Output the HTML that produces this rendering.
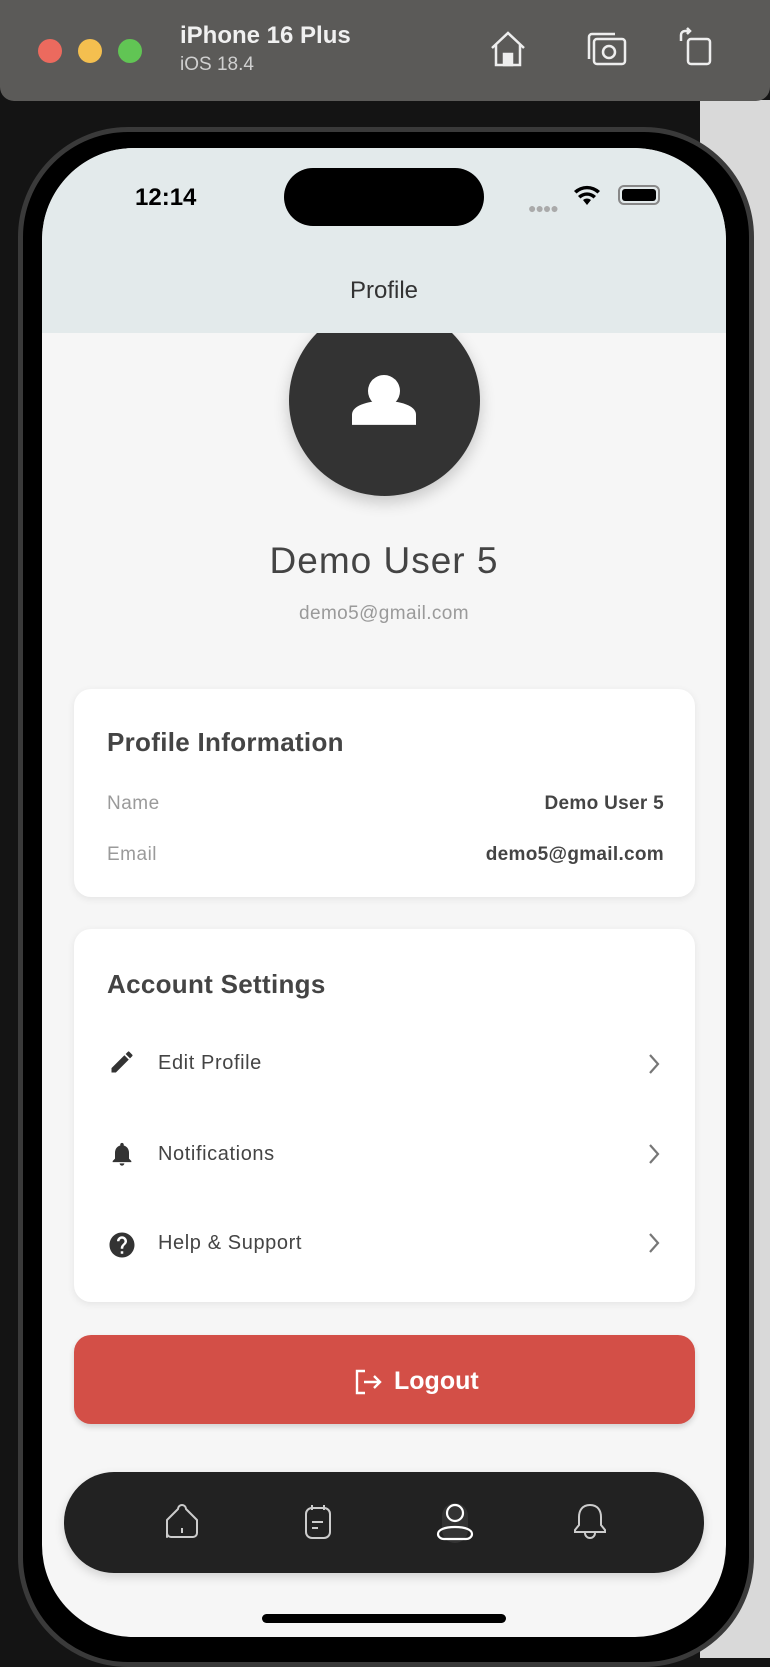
<!DOCTYPE html>
<html><head><meta charset="utf-8"><style>
*{margin:0;padding:0;box-sizing:border-box}
body{width:770px;height:1658px;overflow:hidden;background:#141414;font-family:"Liberation Sans",sans-serif;position:relative}
.abs{position:absolute}
.right{left:700px;top:100px;width:70px;height:1558px;background:#d9d9d9}
.titlebar{left:0;top:0;width:770px;height:101px;background:#5b5a58;border-radius:0 0 14px 14px}
.dot{width:24px;height:24px;border-radius:50%;top:39px}
.frame{left:18px;top:127px;width:736px;height:1540px;background:#000;border-radius:110px;border:5px solid #3a3a3a}
.screen{left:42px;top:148px;width:684px;height:1489px;background:#f6f6f6;border-radius:92px;overflow:hidden}
.header{left:0;top:0;width:684px;height:185px;background:#e3eaeb;z-index:2}
.card{background:#fff;border-radius:17px;box-shadow:0 2px 8px rgba(0,0,0,.08);left:32px;width:621px}
.lbl{color:#9a9a9a;font-size:19px;letter-spacing:.5px}
.val{color:#444;font-size:19px;font-weight:bold;letter-spacing:.3px;right:31px}
.row{color:#444;font-size:20px;letter-spacing:.6px;left:84px}
</style></head><body>
<div class="abs right"></div>
<div class="abs titlebar">
 <div class="abs dot" style="left:38px;background:#ec6a5e"></div>
 <div class="abs dot" style="left:78px;background:#f4bf4f"></div>
 <div class="abs dot" style="left:118px;background:#61c554"></div>
 <div class="abs" style="left:180px;top:22px;color:#f0f0f0;font-size:24px;font-weight:bold">iPhone 16 Plus</div>
 <div class="abs" style="left:180px;top:54px;color:#d0d0d0;font-size:19px">iOS 18.4</div>
 <svg class="abs" style="left:488px;top:30px" width="40" height="38" viewBox="0 0 40 38" fill="none" stroke="#eee" stroke-width="2.5"><path d="M4 18 L20 3 L36 18 M8 15 V35 H32 V15"/><rect x="16" y="24" width="8" height="11" fill="#eee"/></svg>
 <svg class="abs" style="left:585px;top:31px" width="44" height="36" viewBox="0 0 44 36" fill="none" stroke="#eee" stroke-width="2.5"><path d="M4 28 V6 a3 3 0 0 1 3-3 H30"/><rect x="9" y="8" width="31" height="25" rx="3"/><circle cx="24" cy="21" r="6"/></svg>
 <svg class="abs" style="left:678px;top:27px" width="36" height="40" viewBox="0 0 36 40" fill="none" stroke="#eee" stroke-width="2.5"><rect x="10" y="12" width="22" height="25" rx="3"/><path d="M3 14 V8 a4 4 0 0 1 4-4 H12 M9 1 L12 4 L9 7"/></svg>
</div>
<div class="abs frame"></div>
<div class="abs screen">
 <div class="abs header">
  <div class="abs" style="left:93px;top:36px;font-size:24px;font-weight:bold;color:#000">12:14</div>
  <div class="abs" style="left:242px;top:20px;width:200px;height:58px;background:#000;border-radius:29px"></div>
  <div class="abs" style="left:486px;top:52px;color:#aaa;font-size:14px;letter-spacing:-1px">●●●●</div>
  <svg class="abs" style="left:531px;top:36px" width="28" height="22" viewBox="0 0 28 22"><path d="M14 21 L10 16 a6 6 0 0 1 8 0Z M5 12 a13 13 0 0 1 18 0 l-2.5 2.5 a9 9 0 0 0-13 0Z M1 7 a19 19 0 0 1 26 0 l-2.5 2.5 a15 15 0 0 0-21 0Z" fill="#000"/></svg>
  <div class="abs" style="left:576px;top:37px;width:42px;height:20px;border:2px solid #888;border-radius:6px;padding:2px"><div style="width:100%;height:100%;background:#000;border-radius:3px"></div></div>
  <div class="abs" style="left:0;top:129px;width:684px;text-align:center;font-size:24px;color:#333">Profile</div>
 </div>
 <div class="abs" style="left:247px;top:157px;width:191px;height:191px;border-radius:50%;background:#333;box-shadow:0 6px 16px rgba(0,0,0,.2)">
  <svg class="abs" style="left:60px;top:60px" width="72" height="72" viewBox="0 0 72 72" fill="#fff"><circle cx="35" cy="26" r="16"/><path d="M3 72 V60 C3 49 20 44 35 44 C50 44 67 49 67 60 V72Z" transform="translate(0,-2) scale(1,0.86)"/></svg>
 </div>
 <div class="abs" style="left:0;top:392px;width:684px;text-align:center;font-size:37px;color:#444;letter-spacing:1px">Demo User 5</div>
 <div class="abs" style="left:0;top:455px;width:684px;text-align:center;font-size:19px;color:#9a9a9a;letter-spacing:.4px">demo5@gmail.com</div>
 <div class="abs card" style="top:541px;height:208px">
  <div class="abs" style="left:33px;top:38px;font-size:26px;font-weight:bold;color:#444;letter-spacing:.3px">Profile Information</div>
  <div class="abs lbl" style="left:33px;top:104px">Name</div>
  <div class="abs val" style="top:104px">Demo User 5</div>
  <div class="abs lbl" style="left:33px;top:155px">Email</div>
  <div class="abs val" style="top:155px">demo5@gmail.com</div>
 </div>
 <div class="abs card" style="top:781px;height:373px">
  <div class="abs" style="left:33px;top:40px;font-size:26px;font-weight:bold;color:#444;letter-spacing:.3px">Account Settings</div>
  <svg class="abs" style="left:34px;top:119px" width="28" height="28" viewBox="0 0 24 24" fill="#333"><path d="M3 17.25V21h3.75L17.81 9.94l-3.75-3.75L3 17.25zM20.71 7.04a1 1 0 0 0 0-1.41l-2.34-2.34a1 1 0 0 0-1.41 0l-1.83 1.83 3.75 3.75 1.83-1.83z"/></svg>
  <div class="abs row" style="top:123px">Edit Profile</div>
  <svg class="abs" style="left:34px;top:211px" width="28" height="28" viewBox="0 0 24 24" fill="#333"><path d="M12 22c1.1 0 2-.9 2-2h-4c0 1.1.9 2 2 2zm6-6v-5c0-3.07-1.64-5.64-4.5-6.32V4c0-.83-.67-1.5-1.5-1.5s-1.5.67-1.5 1.5v.68C7.630 5.36 6 7.920 6 11v5l-2 2v1h16v-1l-2-2z"/></svg>
  <div class="abs row" style="top:214px">Notifications</div>
  <svg class="abs" style="left:33px;top:301px" width="30" height="30" viewBox="0 0 24 24" fill="#333"><path d="M12 2C6.48 2 2 6.48 2 12s4.48 10 10 10 10-4.48 10-10S17.52 2 12 2zm1 17h-2v-2h2v2zm2.07-7.75l-.9.92C13.45 12.9 13 13.5 13 15h-2v-.5c0-1.1.45-2.1 1.17-2.830l1.24-1.26c.37-.36.59-.86.59-1.41 0-1.1-.9-2-2-2s-2 .9-2 2H8c0-2.21 1.79-4 4-4s4 1.79 4 4c0 .88-.36 1.68-.93 2.25z"/></svg>
  <div class="abs row" style="top:303px">Help &amp; Support</div>
  <svg class="abs" style="left:572px;top:123px" width="16" height="24" viewBox="0 0 16 24" fill="none" stroke="#777" stroke-width="2.2"><path d="M4 3 L12 12 L4 21"/></svg>
  <svg class="abs" style="left:572px;top:213px" width="16" height="24" viewBox="0 0 16 24" fill="none" stroke="#777" stroke-width="2.2"><path d="M4 3 L12 12 L4 21"/></svg>
  <svg class="abs" style="left:572px;top:302px" width="16" height="24" viewBox="0 0 16 24" fill="none" stroke="#777" stroke-width="2.2"><path d="M4 3 L12 12 L4 21"/></svg>
 </div>
 <div class="abs" style="left:32px;top:1187px;width:621px;height:89px;background:#d34f47;border-radius:17px;box-shadow:0 3px 6px rgba(0,0,0,.15)">
  <svg class="abs" style="left:280px;top:34px" width="30" height="26" viewBox="0 0 30 26" fill="none" stroke="#fff" stroke-width="2.4"><path d="M11 2 H3 V24 H11 M10 13 H26 M20 7 L26 13 L20 19"/></svg>
  <div class="abs" style="left:320px;top:32px;color:#fff;font-size:25px;font-weight:bold;letter-spacing:0">Logout</div>
 </div>
 <div class="abs" style="left:22px;top:1324px;width:640px;height:101px;background:#222;border-radius:50px;box-shadow:0 4px 10px rgba(0,0,0,.15)">
  <svg class="abs" style="left:100px;top:32px" width="36" height="36" viewBox="0 0 36 36" fill="none" stroke="#ccc" stroke-width="2"><path d="M3 33 V16 L14 5 a4 4 0 0 1 8 0 L33 16 V29 a4 4 0 0 1-4 4 H7 a4 4 0 0 1-4-4Z M18 24 V29" stroke-linejoin="round"/></svg>
  <svg class="abs" style="left:237px;top:31px" width="34" height="38" viewBox="0 0 34 38" fill="none" stroke="#ccc" stroke-width="2"><rect x="5" y="5" width="24" height="30" rx="6"/><path d="M11 2 V7 M23 2 V7 M11 19 H22 M11 25 H17"/></svg>
  <div class="abs" style="left:378px;top:31px;width:26px;height:40px;border-radius:13px;background:#333"></div>
  <svg class="abs" style="left:370px;top:31px" width="42" height="38" viewBox="0 0 42 38" fill="none" stroke="#fff" stroke-width="2.2"><circle cx="21" cy="10" r="8"/><path d="M21 24 C10 24 4 27 4 31 C4 34 7 36 10 36 H32 C35 36 38 34 38 31 C38 27 32 24 21 24Z"/></svg>
  <svg class="abs" style="left:508px;top:30px" width="36" height="40" viewBox="0 0 36 40" fill="none" stroke="#ccc" stroke-width="2"><path d="M18 3 C10 3 7 9 7 15 V23 L3 28 V30 H33 V28 L29 23 V15 C29 9 26 3 18 3Z M13 31 a5 5 0 0 0 10 0"/></svg>
 </div>
 <div class="abs" style="left:220px;top:1466px;width:244px;height:9px;background:#000;border-radius:5px"></div>
</div>
</body></html>
